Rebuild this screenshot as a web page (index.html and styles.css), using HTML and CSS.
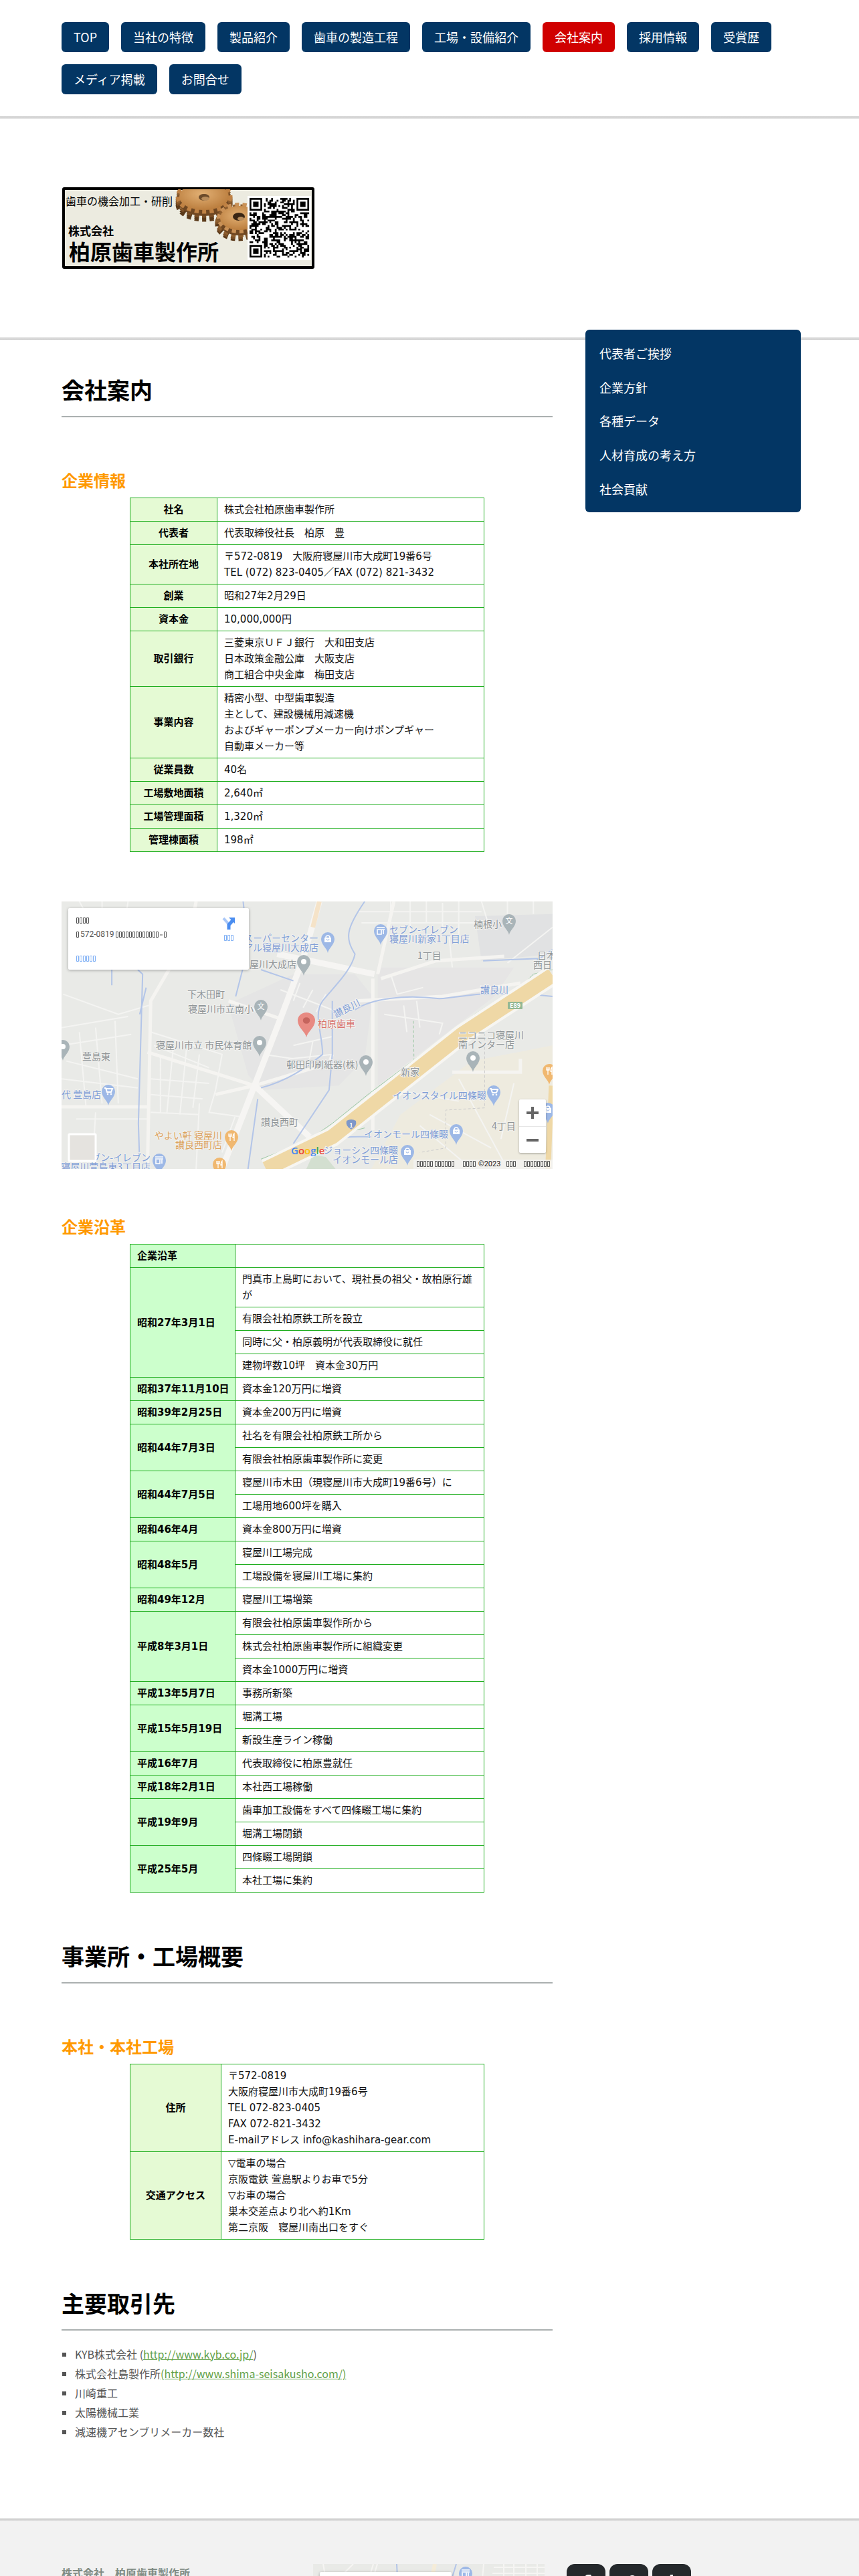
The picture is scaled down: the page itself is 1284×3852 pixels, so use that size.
FILE: index.html
```html
<!DOCTYPE html>
<html lang="ja">
<head>
<meta charset="utf-8">
<meta name="viewport" content="width=device-width, initial-scale=1">
<title>会社案内 | 株式会社 柏原歯車製作所</title>
<link rel="stylesheet" href="styles.css">
</head>
<body>
<header class="site-nav">
  <nav class="nav-list">
    <a href="#">TOP</a>
    <a href="#">当社の特徴</a>
    <a href="#">製品紹介</a>
    <a href="#">歯車の製造工程</a>
    <a href="#">工場・設備紹介</a>
    <a href="#" class="current">会社案内</a>
    <a href="#">採用情報</a>
    <a href="#">受賞歴</a>
    <a href="#">メディア掲載</a>
    <a href="#">お問合せ</a>
  </nav>
</header>

<div class="brand">
  <a href="#" class="logo" aria-label="株式会社柏原歯車製作所">
    <svg width="377" height="122" viewBox="0 0 377 122">
      <defs>
        <radialGradient id="face" cx=".45" cy=".4" r=".65">
          <stop offset="0" stop-color="#e2b074"/><stop offset="1" stop-color="#b87a3a"/>
        </radialGradient>
        <clipPath id="plate"><rect x="4" y="3" width="273" height="115"/></clipPath>
      </defs>
      <rect x="2" y="2" width="373" height="118" rx="1" fill="#ecebe0" stroke="#000" stroke-width="4"/>
      <g clip-path="url(#plate)">
        <g fill="none" stroke="#5b3a1a" stroke-width="9" stroke-dasharray="6 5">
          <ellipse cx="212" cy="26" rx="38" ry="21"/><ellipse cx="212" cy="23" rx="38" ry="21"/>
          <ellipse cx="212" cy="20" rx="38" ry="21" stroke="#7b4f26"/><ellipse cx="212" cy="17" rx="38" ry="21" stroke="#8e5e2e"/>
        </g>
        <ellipse cx="212" cy="24" rx="36" ry="19" fill="#6f4722"/>
        <ellipse cx="212" cy="14" rx="38" ry="21" fill="none" stroke="#c08244" stroke-width="9" stroke-dasharray="6 5"/>
        <ellipse cx="212" cy="14" rx="37" ry="20" fill="url(#face)"/>
        <ellipse cx="212" cy="15" rx="8" ry="5" fill="#6b4a2a"/><ellipse cx="214" cy="17" rx="6" ry="3" fill="#b98d5c"/>
        <g fill="none" stroke="#5b3a1a" stroke-width="9" stroke-dasharray="6 5">
          <ellipse cx="263" cy="56" rx="30" ry="20"/><ellipse cx="263" cy="53" rx="30" ry="20" stroke="#7b4f26"/>
          <ellipse cx="264" cy="50" rx="30" ry="20" stroke="#8e5e2e"/>
        </g>
        <ellipse cx="264" cy="54" rx="28" ry="18" fill="#6f4722"/>
        <ellipse cx="265" cy="46" rx="30" ry="19" fill="none" stroke="#c99157" stroke-width="8" stroke-dasharray="6 5"/>
        <ellipse cx="265" cy="46" rx="29" ry="18" fill="url(#face)"/>
        <ellipse cx="264" cy="44" rx="9" ry="6" fill="#3a2614"/><ellipse cx="267" cy="47" rx="5" ry="3" fill="#b98d5c"/>
      </g>
      <text x="5" y="27" font-size="16">歯車の機会加工・研削</text>
      <text x="9" y="72" font-size="17" font-weight="700">株式会社</text>
      <text x="10" y="109" font-size="32" font-weight="700">柏原歯車製作所</text>
      <rect x="277" y="13" width="95" height="96" fill="#fff"/>
      <path id="qr" transform="translate(280 16) scale(2.7)" fill="#000"/>
    </svg>
  </a>
</div>

<div class="layout">
  <main>
    <h1 class="title">会社案内</h1>

    <h3 class="subtitle">企業情報</h3>
    <table class="grid info">
      <colgroup><col class="c-info"><col></colgroup>
      <tr><th scope="row">社名</th><td>株式会社柏原歯車製作所</td></tr>
      <tr><th scope="row">代表者</th><td>代表取締役社長　柏原　豊</td></tr>
      <tr><th scope="row">本社所在地</th><td>〒572-0819　大阪府寝屋川市大成町19番6号<br>TEL (072) 823-0405／FAX (072) 821-3432</td></tr>
      <tr><th scope="row">創業</th><td>昭和27年2月29日</td></tr>
      <tr><th scope="row">資本金</th><td>10,000,000円</td></tr>
      <tr><th scope="row">取引銀行</th><td>三菱東京ＵＦＪ銀行　大和田支店<br>日本政策金融公庫　大阪支店<br>商工組合中央金庫　梅田支店</td></tr>
      <tr><th scope="row">事業内容</th><td>精密小型、中型歯車製造<br>主として、建設機械用減速機<br>およびギャーポンプメーカー向けポンプギャー<br>自動車メーカー等</td></tr>
      <tr><th scope="row">従業員数</th><td>40名</td></tr>
      <tr><th scope="row">工場敷地面積</th><td>2,640㎡</td></tr>
      <tr><th scope="row">工場管理面積</th><td>1,320㎡</td></tr>
      <tr><th scope="row">管理棟面積</th><td>198㎡</td></tr>
    </table>

    <div class="map">
      <svg class="map-art" viewBox="0 0 734 400" preserveAspectRatio="xMidYMid slice">
        <defs>
          <pattern id="tofu" width="5" height="10" patternUnits="userSpaceOnUse"><path d="M.5 .5h3v8h-3z" fill="none" stroke="#555"/></pattern>
          <pattern id="tofu-blue" width="5" height="10" patternUnits="userSpaceOnUse"><path d="M.5 .5h3v8h-3z" fill="none" stroke="#7fb0f5"/></pattern>
          <path id="pin" d="M0 21C-1 14-10 9-10 0a10 10 0 0 1 20 0C10 9 1 14 0 21z"/>
          <g id="dot"><use href="#pin" fill="#a9b4b8"/><circle r="4" fill="#fff"/></g>
          <g id="bag"><use href="#pin" fill="#9db8e6"/><path d="M-5-2h10v7h-10z" fill="#fff"/><path d="M-3-2a3 3 0 0 1 6 0" fill="none" stroke="#fff" stroke-width="1.5"/><path d="M-2 0a2 2 0 0 0 4 0" fill="none" stroke="#9db8e6"/></g>
          <g id="cart"><use href="#pin" fill="#9db8e6"/><path d="M-6-5h2l2 6h6l2-5h-9" fill="none" stroke="#fff" stroke-width="2"/><circle cx="-1" cy="4" r="1.3" fill="#fff"/><circle cx="4" cy="4" r="1.3" fill="#fff"/></g>
          <g id="store"><use href="#pin" fill="#9db8e6"/><path d="M-6-5H6M-6-2H6M-5-1v6h6v-6M4-1v6" fill="none" stroke="#fff" stroke-width="1.6"/></g>
          <g id="food"><use href="#pin" fill="#f0b870"/><path d="M-4-5v4h4v-4M-2-5v11M4 6v-11q-2 2-2 6h2" fill="none" stroke="#fff" stroke-width="1.3"/></g>
          <g id="school"><use href="#pin" fill="#a9b4b8"/><text y="4" text-anchor="middle" font-size="11" fill="#fff">文</text></g>
        </defs>
        <rect width="734" height="400" fill="#e9eae7"/>
        <g class="roads" transform="scale(.4847 .3333) translate(-25 -54)">
          <path d="M560 500 740 380 930 380 985 480 960 760 880 880 640 900 600 830 540 520z" fill="#e5e5e5"/>
          <path d="M1000 350H1420L1360 480 1000 880z" fill="#e6e5e5"/>
          <path d="M1300 120 1539 110V290L1320 320z" fill="#e1e2e3"/>
          <path d="M980 1254 1070 1010 1290 770 1539 700V1254z" fill="#eeebdf"/>
          <path d="M780 1254 800 1190 840 1200 870 1254z" fill="#d3dfd0"/>
          <g stroke="#f4f4f2" stroke-width="2" fill="none">
            <path d="M80 54 120 160M150 54V250M230 54 210 250M30 470 200 560 295 520M25 620 230 570M25 700 240 650M80 640 100 970M130 620 150 960M190 590 200 960M40 770 260 850M25 850 260 890M70 1030H295M120 1254 130 1000M300 640 520 740 500 900M310 700 480 800M330 750V1000M370 700 350 1000M410 720 390 1010M450 740 430 980M300 850 480 870M300 920 460 940M300 1000 450 1010M700 450 860 540M760 420 740 500M800 450 770 530M840 470 810 550M740 700 860 660M730 760 860 740M800 680 790 760M1040 380 1060 470 1140 440M1020 560 1200 600 1190 650M1080 520 1090 640M1120 500 1130 620M940 100H1320M950 150H1300M1040 54V150M1100 54V200M1150 54V150M1200 60V200M1250 54V200M1320 54 1340 150M1400 54V110M1480 54V110M1220 210 1230 350M1539 170 1400 330M500 900 480 1000 580 1020M450 960 440 1254M560 1020 520 1180M650 740 740 760M1060 900 1250 950M1250 850 1400 1254M1160 1010 1350 1160M1130 1060 1290 1254M1420 870 1380 1120"/>
          </g>
          <g stroke="#f5f4f1" stroke-width="5" fill="none">
            <path d="M25 975H295M290 1254 300 500 420 200 440 54M290 730 620 880M500 920 620 880 850 780 860 740M985 400 985 1080M1050 54 1000 380"/>
            <path d="M540 500 700 580M930 500 1200 480 1440 420M1010 400 1180 320 1390 300M1230 820H1440V760"/>
          </g>
          <g stroke="#f6f5f3" stroke-width="9" fill="none">
            <path d="M820 54 770 310 700 580 620 880 520 1254M690 290 990 380M620 880 790 1110"/>
          </g>
          <path d="M820 54 800 170" stroke="#f5e3c8" stroke-width="7" fill="none"/>
          <g stroke="#b3c5e8" stroke-width="2" fill="none">
            <path d="M585 54 590 120M585 350 562 480M260 360 275 380 262 1050 265 1190M286 440 266 560M960 54C900 180 900 220 930 290 920 360 870 430 830 500 800 560 830 650 830 740 780 800 720 860 640 890M860 500 860 740 850 900 740 1140M630 940 600 1254M640 360 740 410M1325 320 1500 310M1539 270 1490 320M930 540C980 490 1080 470 1190 490 1280 480 1320 450 1539 480M860 1150C880 1100 930 1110 980 1110M180 320V430"/>
          </g>
          <g stroke="#9cc8a4" stroke-width="1" fill="none">
            <path d="M640 1210 780 1130 860 1050 970 920 1300 560 1370 495 1400 500 1480 380 1539 360M720 1240 830 1120 960 1070"/>
            <path d="M1110 590 1112 780" stroke-dasharray="4 3"/>
          </g>
          <path d="M1330 560V980L1210 990V1160L1130 1180" stroke="#ccc" stroke-dasharray="4 3" fill="none"/>
          <path d="M655 1254 860 1110 1260 650 1539 385" stroke="#f7f6f2" stroke-width="30" fill="none"/>
          <path d="M655 1254 860 1110 1260 650 1539 385" stroke="#efd8a6" stroke-width="22" fill="none"/>
          <path d="M1536 880 1525 1254" stroke="#efd8a6" stroke-width="8" fill="none"/>
        </g>
        <g class="label grey">
          <text x="281" y="99">屋川大成店</text><text x="616" y="39">楠根小</text><text x="532" y="86">1丁目</text>
          <text x="711" y="86">日本</text><text x="705" y="100">西日</text><text x="188" y="144">下木田町</text>
          <text x="189" y="166">寝屋川市立南小</text><text x="141" y="220">寝屋川市立 市民体育館</text><text x="31" y="237">萱島東</text>
          <text x="336" y="249">邨田印刷紙器(株)</text><text x="507" y="260">新家</text><text x="593" y="205">ニコニコ寝屋川</text>
          <text x="593" y="219">南インター店</text><text x="298" y="335">讃良西町</text><text x="643" y="341">4丁目</text>
        </g>
        <g class="label blue">
          <text x="490" y="47">セブン-イレブン</text><text x="490" y="61">寝屋川新家1丁目店</text><text x="626" y="137">讃良川</text>
          <text transform="translate(410 174) rotate(-27)">讃良川</text><text x="0" y="294">代 萱島店</text>
          <text x="495" y="295">イオンスタイル四條畷</text><text x="452" y="353">イオンモール四條畷</text>
          <g text-anchor="end"><text x="384" y="60">スーパーセンター</text><text x="384" y="74">アル寝屋川大成店</text>
          <text x="503" y="377">ジョーシン四條畷</text><text x="503" y="391">イオンモール店</text>
          <text x="133" y="388">ブン-イレブン</text><text x="133" y="402">寝屋川萱島東3丁目店</text></g>
        </g>
        <g class="label orange" text-anchor="end"><text x="240" y="355">やよい軒 寝屋川</text><text x="240" y="369">讃良西町店</text></g>
        <text class="label red" x="383" y="188">柏原歯車</text>
        <use href="#bag" x="398" y="56"/><use href="#store" x="477" y="44"/><use href="#school" x="669" y="29"/>
        <use href="#dot" x="362" y="90"/><use href="#school" x="298" y="157"/><use href="#dot" x="296" y="211"/>
        <use href="#dot" x="455" y="240"/><use href="#dot" x="615" y="234"/><use href="#dot" x="2" y="217"/>
        <use href="#cart" x="70" y="284"/><use href="#cart" x="646" y="285"/><use href="#bag" x="590" y="343"/>
        <use href="#bag" x="517" y="374"/><use href="#food" x="254" y="352"/><use href="#food" x="236" y="393"/>
        <use href="#store" x="146" y="387"/><use href="#food" x="729" y="253"/><use href="#bag" x="727" y="311"/>
        <g transform="translate(366 178) scale(1.3 1.2)"><use href="#pin" fill="#e88a82"/><circle r="4" fill="#c5645d"/></g>
        <rect x="667" y="150" width="22" height="11" rx="1" fill="#93b894"/><text x="678" y="159" text-anchor="middle" font-size="9" font-weight="700" fill="#fff">E89</text>
        <path d="M426 328q7-4 14 0 2 8-7 13-9-5-7-13z" fill="#7d97c9"/><text x="433" y="338" text-anchor="middle" font-size="9" font-weight="700" fill="#fff">1</text>
        <text class="google" x="343" y="378"><tspan fill="#4285f4">G</tspan><tspan fill="#ea4335">o</tspan><tspan fill="#fbbc05">o</tspan><tspan fill="#4285f4">g</tspan><tspan fill="#34a853">l</tspan><tspan fill="#ea4335">e</tspan></text>

        <rect class="card" x="10" y="10" width="270" height="92" rx="2"/>
        <g><rect width="20" height="10" transform="translate(22 24)" fill="url(#tofu)"/>
        <rect width="5" height="10" transform="translate(22 45)" fill="url(#tofu)"/>
        <text class="addr" x="28" y="53">572-0819</text>
        <rect width="65" height="10" transform="translate(81 45)" fill="url(#tofu)"/>
        <path d="M147 50h4" stroke="#555"/>
        <rect width="5" height="10" transform="translate(153 45)" fill="url(#tofu)"/>
        <rect width="30" height="10" transform="translate(22 81)" fill="url(#tofu-blue)"/>
        <rect width="15" height="10" transform="translate(243 50)" fill="url(#tofu-blue)"/></g>
        <path d="M242 25l8 9" stroke="#a9c7f8" stroke-width="4"/><path d="M250 42v-7l7-8" fill="none" stroke="#4a8df0" stroke-width="5"/><path d="M250 24h9v9z" fill="#4a8df0"/>

        <rect x="11" y="348" width="40" height="40" rx="1" fill="#e5e3df" stroke="#fff" stroke-width="3"/>
        <rect x="526" y="386" width="208" height="14" fill="#f3f3f1" opacity=".8"/>
        <g fill="url(#tofu)"><rect width="25" height="10" transform="translate(531 388)"/><rect width="30" height="10" transform="translate(558 388)"/>
        <rect width="20" height="10" transform="translate(600 388)"/><rect width="15" height="10" transform="translate(665 388)"/><rect width="40" height="10" transform="translate(691 388)"/></g>
        <text class="copy" x="623" y="396">©2023</text>
      </svg>
      <div class="zoom">
        <button type="button" aria-label="拡大"><svg width="18" height="18"><path d="M9 0v18M0 9h18" stroke="#666" stroke-width="4"/></svg></button>
        <button type="button" aria-label="縮小"><svg width="18" height="18"><path d="M0 9h18" stroke="#666" stroke-width="4"/></svg></button>
      </div>
    </div>

    <h3 class="subtitle after-map">企業沿革</h3>
    <table class="grid history">
      <colgroup><col class="c-history"><col></colgroup>
      <tr><th scope="row">企業沿革</th><td></td></tr>
      <tr><th scope="row" rowspan="4">昭和27年3月1日</th><td>門真市上島町において、現社長の祖父・故柏原行雄が</td></tr>
      <tr><td>有限会社柏原鉄工所を設立</td></tr>
      <tr><td>同時に父・柏原義明が代表取締役に就任</td></tr>
      <tr><td>建物坪数10坪　資本金30万円</td></tr>
      <tr><th scope="row">昭和37年11月10日</th><td>資本金120万円に増資</td></tr>
      <tr><th scope="row">昭和39年2月25日</th><td>資本金200万円に増資</td></tr>
      <tr><th scope="row" rowspan="2">昭和44年7月3日</th><td>社名を有限会社柏原鉄工所から</td></tr>
      <tr><td>有限会社柏原歯車製作所に変更</td></tr>
      <tr><th scope="row" rowspan="2">昭和44年7月5日</th><td>寝屋川市木田（現寝屋川市大成町19番6号）に</td></tr>
      <tr><td>工場用地600坪を購入</td></tr>
      <tr><th scope="row">昭和46年4月</th><td>資本金800万円に増資</td></tr>
      <tr><th scope="row" rowspan="2">昭和48年5月</th><td>寝屋川工場完成</td></tr>
      <tr><td>工場設備を寝屋川工場に集約</td></tr>
      <tr><th scope="row">昭和49年12月</th><td>寝屋川工場増築</td></tr>
      <tr><th scope="row" rowspan="3">平成8年3月1日</th><td>有限会社柏原歯車製作所から</td></tr>
      <tr><td>株式会社柏原歯車製作所に組織変更</td></tr>
      <tr><td>資本金1000万円に増資</td></tr>
      <tr><th scope="row">平成13年5月7日</th><td>事務所新築</td></tr>
      <tr><th scope="row" rowspan="2">平成15年5月19日</th><td>堀溝工場</td></tr>
      <tr><td>新設生産ライン稼働</td></tr>
      <tr><th scope="row">平成16年7月</th><td>代表取締役に柏原豊就任</td></tr>
      <tr><th scope="row">平成18年2月1日</th><td>本社西工場稼働</td></tr>
      <tr><th scope="row" rowspan="2">平成19年9月</th><td>歯車加工設備をすべて四條畷工場に集約</td></tr>
      <tr><td>堀溝工場閉鎖</td></tr>
      <tr><th scope="row" rowspan="2">平成25年5月</th><td>四條畷工場閉鎖</td></tr>
      <tr><td>本社工場に集約</td></tr>
    </table>

    <h2 class="title">事業所・工場概要</h2>

    <h3 class="subtitle">本社・本社工場</h3>
    <table class="grid info">
      <colgroup><col class="c-office"><col></colgroup>
      <tr><th scope="row">住所</th><td>〒572-0819<br>大阪府寝屋川市大成町19番6号<br>TEL 072-823-0405<br>FAX 072-821-3432<br>E-mailアドレス info@kashihara-gear.com</td></tr>
      <tr><th scope="row">交通アクセス</th><td>▽電車の場合<br>京阪電鉄 萱島駅よりお車で5分<br>▽お車の場合<br>巣本交差点より北へ約1Km<br>第二京阪　寝屋川南出口をすぐ</td></tr>
    </table>

    <h2 class="title title-list">主要取引先</h2>
    <ul class="clients">
      <li>KYB株式会社 (<a href="http://www.kyb.co.jp/">http://www.kyb.co.jp/</a>)</li>
      <li>株式会社島製作所<a href="http://www.shima-seisakusho.com/">(http://www.shima-seisakusho.com/)</a></li>
      <li>川崎重工</li>
      <li>太陽機械工業</li>
      <li>減速機アセンブリメーカー数社</li>
    </ul>
  </main>

  <aside class="side">
    <a href="#">代表者ご挨拶</a>
    <a href="#">企業方針</a>
    <a href="#">各種データ</a>
    <a href="#">人材育成の考え方</a>
    <a href="#">社会貢献</a>
  </aside>
</div>

<footer class="footer">
  <strong class="company">株式会社　柏原歯車製作所</strong>
  <svg class="footer-map" viewBox="0 0 346 57" preserveAspectRatio="xMidYMin slice">
    <rect width="346" height="57" fill="#e9eae7"/>
    <path d="M15 0 25 57M60 0 40 20M90 0 84 20M96 0 90 20M270 5H346M268 14H346M285 0V57M300 0V57M318 0V57M335 0V57M255 0 250 57" stroke="#f6f5f3" stroke-width="2" fill="none"/>
    <path d="M182 0 178 20" stroke="#f5ecd8" stroke-width="6"/>
    <path d="M125 0 126 20M214 0 208 20" stroke="#b3c5e8" stroke-width="2"/>
    <rect class="card" x="10" y="12" width="197" height="60" rx="2"/>
    <use href="#store" x="228" y="14"/>
  </svg>
  <div class="social">
    <a href="#" aria-label="Facebook"><svg viewBox="0 0 58 58"><path d="M36 16h-4q-5 0-5 6v5h-4v6h4v16h7v-16h5l1-6h-6v-3q0-2 2-2h3z" fill="#fff"/></svg></a>
    <a href="#" aria-label="Twitter"><svg viewBox="0 0 58 58"><path d="M44 22l-3 3q0 12-11 17-8 3-15-1 5 0 8-2-5-1-6-5h3q-5-2-5-7l3 1q-4-4-2-9 5 6 13 7-1-9 5-9 3 0 5 2l4-1-2 4z" fill="#fff"/></svg></a>
    <a href="#" aria-label="Tumblr"><svg viewBox="0 0 58 58"><path d="M27 16h4v9h7v5h-7v8q1 4 7 2v6q-13 3-13-6v-10h-4v-4q5-2 6-10z" fill="#fff"/></svg></a>
  </div>
</footer>
<script src="qr.js"></script>
</body>
</html>
```
FILE: styles.css
```css
* { box-sizing: border-box; }

body {
  margin: 0;
  background: #fff;
  color: #555;
  font-family: "Noto Sans CJK JP", "Noto Sans", sans-serif;
  font-size: 16px;
}

svg { display: block; }

/* Navigation */
.site-nav { padding: 33px 92px; }
.nav-list { display: flex; flex-wrap: wrap; gap: 18px; }
.nav-list a {
  padding: 10px 18px;
  border-radius: 6px;
  background: #033664;
  color: #fff;
  font-size: 18px;
  line-height: 25px;
  text-decoration: none;
}
.nav-list .current { background: #d00000; }

/* Logo band */
.brand {
  padding: 106px 93px;
  background:
    linear-gradient(#c4c4c4, #ededed) top / 100% 4px no-repeat,
    linear-gradient(#ededed, #c8c8c8) bottom / 100% 4px no-repeat,
    #fff;
}
.logo { display: inline-block; vertical-align: top; color: #000; }

/* Page columns */
.layout {
  display: grid;
  grid-template-columns: minmax(0, 734fr) minmax(0, 322fr);
  gap: 49px;
  align-items: start;
  padding: 0 87px 115px 92px;
}
main { padding-top: 52px; }

.title {
  margin: 0 0 76px;
  padding-bottom: 16px;
  border-bottom: 2px solid #abb0b0;
  color: #000;
  font-size: 34px;
  font-weight: 700;
  line-height: 46px;
}
.grid + .title { margin-top: 72px; }
.title-list { margin-bottom: 21px; }
.subtitle {
  margin: 0 0 8px;
  color: #f90;
  font-size: 24px;
  font-weight: 700;
  line-height: 36px;
}
.after-map { margin-top: 68px; }

/* Tables */
.grid {
  width: 530px;
  max-width: 100%;
  margin: 0 auto;
  border-collapse: collapse;
  table-layout: fixed;
  color: #111;
  font-family: "DejaVu Sans", "Noto Sans CJK JP", sans-serif;
  font-size: 15px;
  line-height: 24px;
}
.grid th, .grid td {
  height: 35px;
  padding: 5px 10px;
  border: 1px solid #1fae1f;
  text-align: left;
}
.grid th { color: #000; font-weight: 700; white-space: nowrap; }
.info th { background: #e5fad4; text-align: center; }
.history th { background: #ccffcc; }
.c-info { width: 130px; }
.c-history { width: 157px; }
.c-office { width: 136px; }

/* Map */
.map {
  position: relative;
  height: 400px;
  margin-top: 74px;
  overflow: hidden;
}
.map-art { width: 100%; height: 100%; }
.roads path { vector-effect: non-scaling-stroke; }
.label { font-size: 14px; paint-order: stroke; stroke: #f1f1ef; stroke-width: 2px; }
.grey { fill: #8f9598; }
.blue { fill: #7f9dd6; }
.orange { fill: #dca25c; }
.red { fill: #d9736d; }
.google { font-family: "Open Sans", sans-serif; font-size: 15px; font-weight: 600; }
.addr { fill: #555; font-family: Roboto, sans-serif; font-size: 12px; }
.copy { fill: #222; font-family: Roboto, sans-serif; font-size: 11px; }
.card { fill: #fff; filter: drop-shadow(0 1px 2px rgba(0, 0, 0, .3)); }
.zoom {
  position: absolute;
  right: 10px;
  bottom: 24px;
  display: flex;
  flex-direction: column;
  width: 40px;
  border-radius: 2px;
  background: #fff;
  box-shadow: 0 1px 3px rgba(0, 0, 0, .3);
}
.zoom button {
  display: grid;
  place-items: center;
  height: 40px;
  padding: 0;
  border: 0;
  background: none;
}
.zoom button + button { border-top: 1px solid #e6e6e6; }

/* Clients */
.clients { margin: 0; padding: 0; list-style: none; line-height: 29px; }
.clients li { display: flex; align-items: center; white-space: pre; }
.clients li::before {
  content: "";
  width: 6px;
  height: 6px;
  margin: 0 13px 0 1px;
  background: #555;
}
.clients a { color: #5fa046; }

/* Side menu, pulled up over the logo band */
.side {
  display: grid;
  grid-auto-rows: 1fr;
  min-height: 273px;
  margin-top: -15px;
  padding: 10px 21px;
  border-radius: 6px;
  background: #033664;
}
.side a {
  display: flex;
  align-items: center;
  color: #fff;
  font-size: 18px;
  text-decoration: none;
}

/* Footer */
.footer {
  display: grid;
  grid-template-columns: minmax(0, 343fr) minmax(0, 346fr) minmax(0, 350fr);
  gap: 33px;
  height: 86px;
  padding: 68px 87px 0 92px;
  overflow: hidden;
  background: linear-gradient(#c4c4c4, #e6e6e6) top / 100% 4px no-repeat, #f2f2f2;
}
.company { color: #808c84; line-height: 26px; }
.footer-map { width: 100%; height: 57px; }
.social { display: flex; gap: 6px; }
.social a { width: 58px; height: 58px; border-radius: 12px; background: #25292c; }
```
FILE: qr.js
```js
// Fills the logo's code square: 33 modules a side, finder marks in three corners.
(function () {
  var size = 33, seed = 7, d = "";
  function finder(x, y) {
    var corners = [[0, 0], [size - 7, 0], [0, size - 7]];
    for (var i = 0; i < 3; i++) {
      var dx = x - corners[i][0], dy = y - corners[i][1];
      if (dx >= -1 && dx <= 7 && dy >= -1 && dy <= 7) {
        var r = Math.max(Math.abs(dx - 3), Math.abs(dy - 3));
        return r === 3 || r <= 1;
      }
    }
    return null;
  }
  for (var y = 0; y < size; y++) {
    for (var x = 0; x < size; x++) {
      seed = (seed * 1103515245 + 12345) % 2147483648;
      var f = finder(x, y);
      if (f === null ? seed / 2147483648 > 0.5 : f) d += "M" + x + " " + y + "h1v1h-1z";
    }
  }
  document.getElementById("qr").setAttribute("d", d);
})();
```
